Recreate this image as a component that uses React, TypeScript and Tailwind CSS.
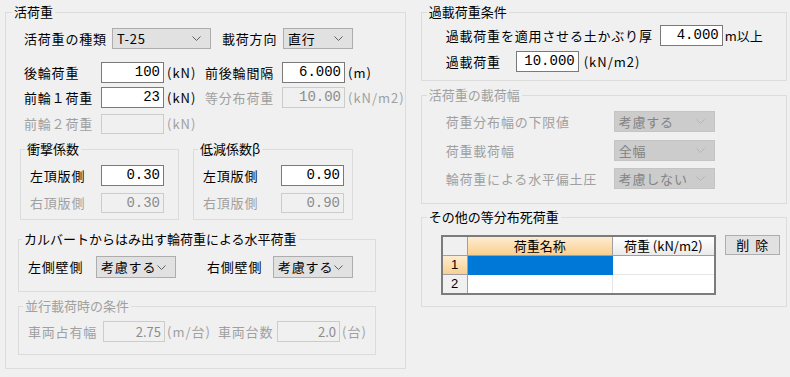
import React from "react";

const Chevron = ({ c = "#606060" }: { c?: string }) => (
  <svg width="9" height="5" viewBox="0 0 9 5" className="shrink-0">
    <path d="M0.5 0.5L4.5 4.5L8.5 0.5" fill="none" stroke={c} strokeWidth="1" />
  </svg>
);

function Sel({ cls, text, disabled }: { cls: string; text: string; disabled?: boolean }) {
  return (
    <div
      className={
        "flex items-center justify-between border pl-[4px] pr-[9px] text-[13px] tracking-[0.8px] " +
        (disabled
          ? "border-[#c4c4c4] bg-[#cccccc] text-[#838383] "
          : "border-[#adadad] bg-[#e1e1e1] text-black ") +
        cls
      }
    >
      <span>{text}</span>
      <Chevron c={disabled ? "#b4b4b4" : "#606060"} />
    </div>
  );
}

function Inp({ cls, v, disabled, prop }: { cls: string; v: string; disabled?: boolean; prop?: boolean }) {
  return (
    <div
      className={
        "flex items-center justify-end border pr-[3px] " +
        (prop ? "text-[13px] " : "font-['Liberation_Mono',monospace] text-[14px] ") +
        (disabled
          ? "border-[#cccccc] bg-[#f0f0f0] text-[#8c8c8c] "
          : "border-[#7a7a7a] bg-white text-black ") +
        cls
      }
    >
      {v}
    </div>
  );
}

const U = ({ t, cls, dis }: { t: string; cls: string; dis?: boolean }) => (
  <div
    className={
      "text-[13px] tracking-[1px] whitespace-nowrap " +
      (dis ? "text-[#a0a0a0] " : "text-black ") +
      cls
    }
  >
    {t}
  </div>
);

const L = ({ t, cls, dis }: { t: string; cls: string; dis?: boolean }) => (
  <div className={"text-[13px] tracking-[0.8px] whitespace-nowrap " + (dis ? "text-[#a0a0a0] " : "text-black ") + cls}>{t}</div>
);

export default function App() {
  return (
    <div className="w-[790px] h-[377px] bg-[#f0f0f0] flex pl-[5px] font-['Noto_Sans_CJK_JP',sans-serif] text-black overflow-hidden">
      {/* Left group */}
      <fieldset className="mt-[4px] w-[400px] h-[365px] border border-[#dcdcdc] flex flex-col">
        <legend className="ml-[6px] px-[2px] text-[13px] leading-[16px]">活荷重</legend>
        <div className="flex flex-col">
          <div className="mt-[8px] flex items-center h-[21px] pl-[18px]">
            <L t="活荷重の種類" cls="w-[88px]" />
            <Sel cls="w-[99px] h-[21px]" text="T-25" />
            <L t="載荷方向" cls="ml-[11px] w-[61px]" />
            <Sel cls="w-[70px] h-[21px]" text="直行" />
          </div>
          <div className="mt-[13px] flex items-center h-[21px] pl-[18px]">
            <L t="後輪荷重" cls="w-[77px]" />
            <Inp cls="w-[63px] h-[21px]" v="100" />
            <U t="(kN)" cls="w-[41px] pl-[3px]" />
            <L t="前後輪間隔" cls="w-[77px]" />
            <Inp cls="w-[63px] h-[21px]" v="6.000" />
            <U t="(m)" cls="pl-[3px]" />
          </div>
          <div className="mt-[4px] flex items-center h-[21px] pl-[18px]">
            <L t="前輪１荷重" cls="w-[77px]" />
            <Inp cls="w-[63px] h-[21px]" v="23" />
            <U t="(kN)" cls="w-[41px] pl-[3px]" />
            <L t="等分布荷重" cls="w-[77px]" dis />
            <Inp cls="w-[63px] h-[21px]" v="10.00" disabled />
            <U t="(kN/m2)" cls="pl-[3px]" dis />
          </div>
          <div className="mt-[6px] flex items-center h-[20px] pl-[18px]">
            <L t="前輪２荷重" cls="w-[77px]" dis />
            <Inp cls="w-[63px] h-[20px]" v="" disabled />
            <U t="(kN)" cls="w-[41px] pl-[3px]" dis />
          </div>
          <div className="mt-[7px] flex pl-[14px]">
            <fieldset className="w-[159px] h-[79px] border border-[#dcdcdc]">
              <legend className="ml-[4px] px-[2px] text-[13px] leading-[16px]">衝撃係数</legend>
              <div className="mt-[8px] flex items-center h-[21px] pl-[9px]">
                <L t="左頂版側" cls="w-[71px]" />
                <Inp cls="w-[63px] h-[21px]" v="0.30" />
              </div>
              <div className="mt-[7px] flex items-center h-[20px] pl-[9px]">
                <L t="右頂版側" cls="w-[71px]" dis />
                <Inp cls="w-[63px] h-[20px]" v="0.30" disabled />
              </div>
            </fieldset>
            <fieldset className="ml-[14px] w-[160px] h-[79px] border border-[#dcdcdc]">
              <legend className="ml-[4px] px-[2px] text-[13px] leading-[16px]">低減係数β</legend>
              <div className="mt-[8px] flex items-center h-[21px] pl-[9px]">
                <L t="左頂版側" cls="w-[78px]" />
                <Inp cls="w-[63px] h-[21px]" v="0.90" />
              </div>
              <div className="mt-[7px] flex items-center h-[20px] pl-[9px]">
                <L t="右頂版側" cls="w-[78px]" dis />
                <Inp cls="w-[63px] h-[20px]" v="0.90" disabled />
              </div>
            </fieldset>
          </div>
          <fieldset className="mt-[11px] ml-[12px] w-[358px] h-[61px] border border-[#dcdcdc]">
            <legend className="ml-[3px] px-[2px] text-[13px] leading-[16px]">カルバートからはみ出す輪荷重による水平荷重</legend>
            <div className="mt-[9px] flex items-center h-[22px] pl-[9px]">
              <L t="左側壁側" cls="w-[68px]" />
              <Sel cls="w-[80px] h-[22px]" text="考慮する" />
              <L t="右側壁側" cls="ml-[31px] w-[66px]" />
              <Sel cls="w-[80px] h-[22px]" text="考慮する" />
            </div>
          </fieldset>
          <fieldset className="mt-[6px] ml-[12px] w-[358px] h-[57px] border border-[#dcdcdc]">
            <legend className="ml-[4px] px-[2px] text-[13px] leading-[16px] text-[#a0a0a0]">並行載荷時の条件</legend>
            <div className="mt-[7px] flex items-center h-[21px] pl-[9px]">
              <L t="車両占有幅" cls="w-[75px]" dis />
              <Inp cls="w-[62px] h-[21px]" v="2.75" disabled prop />
              <U t="(m/台)" cls="w-[53px] pl-[2px]" dis />
              <L t="車両台数" cls="w-[59px]" dis />
              <Inp cls="w-[63px] h-[21px]" v="2.0" disabled prop />
              <U t="(台)" cls="pl-[2px]" dis />
            </div>
          </fieldset>
        </div>
      </fieldset>

      {/* Right column */}
      <div className="ml-[15px] w-[366px] flex flex-col">
        <fieldset className="mt-[4px] h-[77px] border border-[#dcdcdc]">
          <legend className="ml-[5px] px-[2px] text-[13px] leading-[16px]">過載荷重条件</legend>
          <div className="mt-[5px] flex items-center h-[21px] pl-[24px]">
            <L t="過載荷重を適用させる土かぶり厚" cls="w-[214px]" />
            <Inp cls="w-[63px] h-[21px]" v="4.000" />
            <div className="pl-[2px] text-[13px] whitespace-nowrap">m以上</div>
          </div>
          <div className="mt-[5px] flex items-center h-[21px] pl-[24px]">
            <L t="過載荷重" cls="w-[70px]" />
            <Inp cls="w-[63px] h-[21px]" v="10.000" />
            <U t="(kN/m2)" cls="pl-[5px]" />
          </div>
        </fieldset>
        <fieldset className="mt-[6px] h-[117px] border border-[#dcdcdc]">
          <legend className="ml-[5px] px-[2px] text-[13px] leading-[16px] text-[#a0a0a0]">活荷重の載荷幅</legend>
          <div className="mt-[8px] flex items-center h-[21px] pl-[24px]">
            <L t="荷重分布幅の下限値" cls="w-[168px]" dis />
            <Sel cls="w-[101px] h-[21px]" text="考慮する" disabled />
          </div>
          <div className="mt-[8px] flex items-center h-[21px] pl-[24px]">
            <L t="荷重載荷幅" cls="w-[168px]" dis />
            <Sel cls="w-[101px] h-[21px]" text="全幅" disabled />
          </div>
          <div className="mt-[7px] flex items-center h-[21px] pl-[24px]">
            <L t="輪荷重による水平偏土圧" cls="w-[168px]" dis />
            <Sel cls="w-[101px] h-[21px]" text="考慮しない" disabled />
          </div>
        </fieldset>
        <fieldset className="mt-[5px] h-[98px] border border-[#dcdcdc]">
          <legend className="ml-[5px] px-[2px] text-[13px] leading-[16px]">その他の等分布死荷重</legend>
          <div className="mt-[10px] flex items-start pl-[19px]">
            <div className="w-[275px] h-[60px] border-2 border-[#7c7c7c] bg-white">
              <div className="grid grid-cols-[25px_145px_101px] grid-rows-[19px_19px_18px] text-[13px] font-['Liberation_Sans','Noto_Sans_CJK_JP',sans-serif]">
                <div className="bg-[#f0f0f0] border-r border-b border-[#a0a0a0]" />
                <div className="flex items-center justify-center bg-gradient-to-b from-[#fdecd0] to-[#f9cf8f] border-r border-b border-[#a0a0a0] font-['Noto_Sans_CJK_JP',sans-serif]">
                  荷重名称
                </div>
                <div className="flex items-center justify-center bg-gradient-to-b from-[#ffffff] to-[#eaeaea] border-b border-[#a0a0a0] font-['Noto_Sans_CJK_JP',sans-serif]">
                  荷重 (kN/m2)
                </div>
                <div className="flex items-center justify-center bg-gradient-to-b from-[#fdecd0] to-[#f9cf8f] border-r border-b border-[#a0a0a0]">
                  1
                </div>
                <div className="bg-[#0078d7] border-r border-b border-[#0078d7]" />
                <div className="border-b border-[#e6e6e6]" />
                <div className="flex items-center justify-center bg-[#f0f0f0] border-r border-[#a0a0a0]">2</div>
                <div className="border-r border-[#e6e6e6]" />
                <div />
              </div>
            </div>
            <button className="ml-[9px] w-[55px] h-[20px] border border-[#adadad] bg-[#e1e1e1] text-[13px] tracking-[6px] pl-[6px] leading-[18px]">
              削除
            </button>
          </div>
        </fieldset>
      </div>
    </div>
  );
}
